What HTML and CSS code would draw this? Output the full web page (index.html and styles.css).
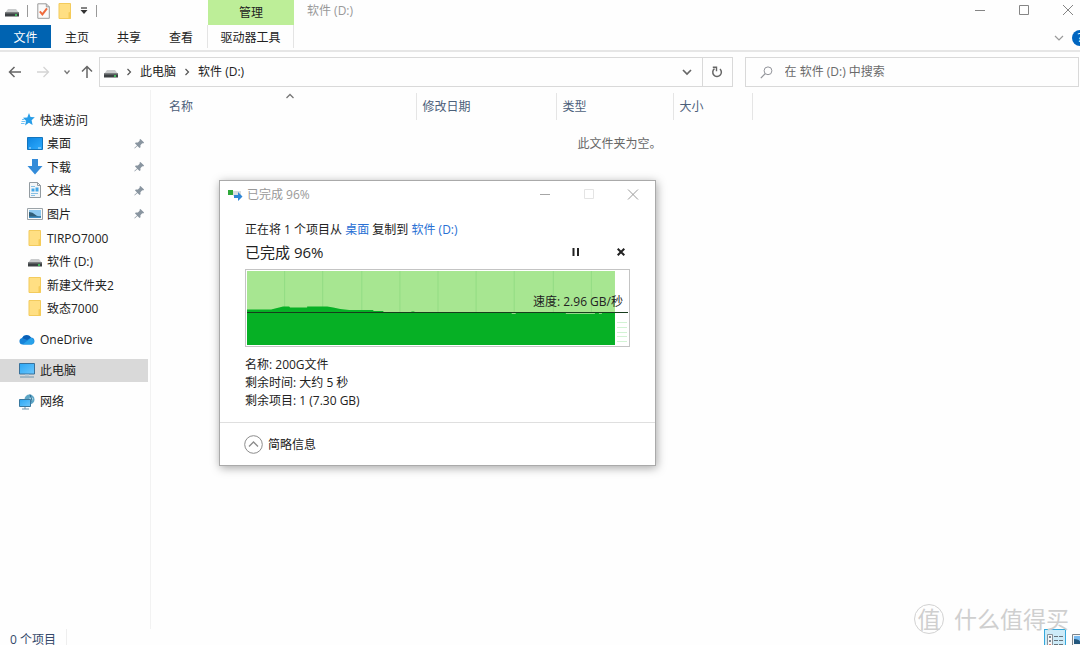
FILE: index.html
```html
<!DOCTYPE html>
<html lang="zh-CN">
<head>
<meta charset="utf-8">
<title>软件 (D:)</title>
<link rel="stylesheet" href="styles.css">
</head>
<body>
<svg class="sprite" aria-hidden="true">
  <defs>
    <linearGradient id="screen" x1="0" y1="0" x2="1" y2="1"><stop offset="0" stop-color="#2aa7f5"/><stop offset="1" stop-color="#6cc6fb"/></linearGradient>
    <linearGradient id="desk" x1="0" y1="0" x2="1" y2="1"><stop offset="0" stop-color="#0d84e0"/><stop offset="1" stop-color="#2eacff"/></linearGradient>
  </defs>
  <symbol id="drive" viewBox="0 0 14 14"><path d="M3 5h8l3 4H0z" fill="#c9cbcc"/><path d="M0 8.500h14v4H0z" fill="#3c4043"/><path d="M0 8.500h14v1H0z" fill="#74787b"/><circle cx="11" cy="11" r="1" fill="#45e066"/></symbol>
  <symbol id="folder" viewBox="0 0 14 16"><path d="M1 .5h11.500v15H1z" fill="#ffdf83" stroke="#f3cb5d"/><path d="M10.500 9.500l2.500-1v7h-2.500z" fill="#f5cb58"/></symbol>
  <symbol id="pin" viewBox="0 0 12 12"><path d="M7 1l4 4-1 1-1-.2-2 2 .1 2.200-1 1-2.400-2.400L.8 11.500l-.5-.5 3-2.900L1 5.800l1-1 2.200.1 2-2L6 2z" fill="#8995a0"/></symbol>
</svg>

<header class="titlebar">
  <div class="quick">
    <svg class="i14" aria-hidden="true"><use href="#drive"/></svg>
    <span class="bar"></span>
    <button class="plain" aria-label="属性"><svg width="13" height="16" viewBox="0 0 13 16"><path d="M.8.8h8.500l3 3v11.500H.8z" fill="#fafafa" stroke="#9b9b9b"/><path d="M9.300.8v3h3" fill="none" stroke="#9b9b9b"/><path d="M2.800 8.300l2.600 3 4.600-6" fill="none" stroke="#ee6a3c" stroke-width="2"/></svg></button>
    <button class="plain" aria-label="新建文件夹"><svg class="i-folder"><use href="#folder"/></svg></button>
    <button class="plain" aria-label="自定义快速访问工具栏"><svg width="8" height="8" viewBox="0 0 8 8"><path d="M1 1h6" stroke="#333" stroke-width="1.200"/><path d="M.5 3h7L4 7z" fill="#333"/></svg></button>
    <span class="bar"></span>
  </div>
  <div class="context">管理</div>
  <h1 class="caption">软件 (D:)</h1>
  <div class="wincontrols">
    <button class="plain" aria-label="最小化"><svg width="12" height="12" viewBox="0 0 12 12"><path d="M1 6.500h10" stroke="#858585"/></svg></button>
    <button class="plain" aria-label="最大化"><svg width="12" height="12" viewBox="0 0 12 12"><path d="M1.500 1.500h9v9h-9z" fill="none" stroke="#858585"/></svg></button>
    <button class="plain" aria-label="关闭"><svg width="12" height="12" viewBox="0 0 12 12"><path d="M1 1l10 10M11 1L1 11" stroke="#858585"/></svg></button>
  </div>
</header>

<nav class="ribbon">
  <button class="tab file">文件</button>
  <button class="tab">主页</button>
  <button class="tab">共享</button>
  <button class="tab">查看</button>
  <button class="tab tools">驱动器工具</button>
  <div class="ribbon-end">
    <button class="plain" aria-label="展开功能区"><svg width="10" height="8" viewBox="0 0 10 8"><path d="M1 2l4 4 4-4" fill="none" stroke="#9a9a9a" stroke-width="1.200"/></svg></button>
    <button class="help" aria-label="帮助">?</button>
  </div>
</nav>

<div class="navrow">
  <div class="arrows">
    <button class="plain" aria-label="后退"><svg width="14" height="12" viewBox="0 0 14 12"><path d="M6.500 1L1.500 6l5 5M1.500 6H13" fill="none" stroke="#666" stroke-width="1.500"/></svg></button>
    <button class="plain" aria-label="前进" disabled><svg width="14" height="12" viewBox="0 0 14 12"><path d="M7.500 1l5 5-5 5M12.500 6H1" fill="none" stroke="#d4d4d4" stroke-width="1.300"/></svg></button>
    <button class="plain recent" aria-label="最近位置"><svg width="8" height="8" viewBox="0 0 8 8"><path d="M1.500 2.500L4 5.500l2.500-3" fill="none" stroke="#777" stroke-width="1.300"/></svg></button>
    <button class="plain" aria-label="上移"><svg width="12" height="14" viewBox="0 0 12 14"><path d="M1 6.500l5-5 5 5M6 1.500V13" fill="none" stroke="#666" stroke-width="1.500"/></svg></button>
  </div>
  <div class="address">
    <svg class="i14" aria-hidden="true"><use href="#drive"/></svg>
    <svg class="sep" viewBox="0 0 6 8"><path d="M1.500 1l3 3-3 3" fill="none" stroke="#555" stroke-width="1.200"/></svg>
    <button class="plain">此电脑</button>
    <svg class="sep" viewBox="0 0 6 8"><path d="M1.500 1l3 3-3 3" fill="none" stroke="#555" stroke-width="1.200"/></svg>
    <button class="plain">软件 (D:)</button>
    <button class="plain drop" aria-label="以前的位置"><svg width="10" height="8" viewBox="0 0 10 8"><path d="M1 2l4 4 4-4" fill="none" stroke="#666" stroke-width="1.700"/></svg></button>
    <button class="plain refresh" aria-label="刷新"><svg width="12" height="12" viewBox="0 0 12 12"><path d="M9 3a4.300 4.300 0 1 1-5.500-.3" fill="none" stroke="#666" stroke-width="1.500"/><path d="M1.800 1.300h3.700v4" fill="none" stroke="#666" stroke-width="1.400"/></svg></button>
  </div>
  <label class="search">
    <svg width="13" height="13" viewBox="0 0 13 13" aria-hidden="true"><circle cx="8" cy="4.800" r="3.900" fill="none" stroke="#92949a"/><path d="M5.200 7.700L.8 12.200" stroke="#92949a" stroke-width="1.200"/></svg>
    <input type="text" aria-label="搜索" placeholder="在 软件 (D:) 中搜索">
  </label>
</div>

<main class="content">
  <aside class="sidebar">
    <ul class="places">
      <li class="row root"><svg width="14" height="13" viewBox="0 0 14 13"><path d="M8 0l1.500 4 4.300.2-3.200 3 1 4.800-3.700-2.300L4 12.500l1.200-4.600L2 4.800l4.300-.4z" fill="#279de8"/><path d="M.5 8.500h4M0 10.500h3.500M1 6.500h2.500" stroke="#74c3f5"/></svg><span>快速访问</span></li>
      <li class="row"><svg width="16" height="13" viewBox="0 0 16 13"><path d="M.5.500h15v12H.5z" fill="url(#desk)" stroke="#1375bd"/><path d="M2 11h2M11 11h3" stroke="#b7e3ff"/></svg><span>桌面</span><svg class="pin"><use href="#pin"/></svg></li>
      <li class="row"><svg width="16" height="16" viewBox="0 0 16 16"><path d="M5 0h6v7h4.500L8 15.500.5 7H5z" fill="#338bd9"/></svg><span>下载</span><svg class="pin"><use href="#pin"/></svg></li>
      <li class="row"><svg width="16" height="16" viewBox="0 0 16 16"><path d="M2.500.5h8l3 3v12h-11z" fill="#f3f6f8" stroke="#929ba1"/><path d="M10.500.5v3h3" fill="none" stroke="#929ba1"/><path d="M4 4.500h4M4 11.500h7M4 13.500h4" stroke="#86bfe4"/><path d="M4.500 6.500h3v3h-3zM8.500 5.500h3v4h-3z" fill="#45a7e7"/></svg><span>文档</span><svg class="pin"><use href="#pin"/></svg></li>
      <li class="row"><svg width="16" height="12" viewBox="0 0 16 12"><path d="M.5.500h15v11H.5z" fill="#f9fafa" stroke="#9ba3a8"/><path d="M2 2h12v8H2z" fill="#8fcaf0"/><path d="M2 4q4 0 6 2.500t6 1.500v2H2z" fill="#315f78"/><path d="M2 8.500h12V10H2z" fill="#3f8ec2"/></svg><span>图片</span><svg class="pin"><use href="#pin"/></svg></li>
      <li class="row"><svg class="i-folder"><use href="#folder"/></svg><span>TIRPO7000</span></li>
      <li class="row"><svg class="i14"><use href="#drive"/></svg><span>软件 (D:)</span></li>
      <li class="row"><svg class="i-folder"><use href="#folder"/></svg><span>新建文件夹2</span></li>
      <li class="row"><svg class="i-folder"><use href="#folder"/></svg><span>致态7000</span></li>
    </ul>
    <ul class="roots">
      <li class="row root"><svg width="16" height="11" viewBox="0 0 16 11"><path d="M3.500 10.500A3.300 3.300 0 0 1 3 4a5 5 0 0 1 9-.5 3.600 3.600 0 0 1 1 7z" fill="#1683d8"/><path d="M3.300 4A5 5 0 0 1 12 3.500L8 6z" fill="#0b5fb5"/><path d="M3.500 10.500L9 6.200l3-2.500a3.600 3.600 0 0 1 1 6.800z" fill="#28a2ea"/></svg><span>OneDrive</span></li>
      <li class="row root active"><svg width="16" height="15" viewBox="0 0 16 15"><path d="M.5.500h15v10.500H.5z" fill="url(#screen)" stroke="#39719a"/><path d="M6 11.500h4v1.500H6z" fill="#b9cbd6"/><path d="M1 14h14" stroke="#6d93ac"/></svg><span>此电脑</span></li>
      <li class="row root"><svg width="16" height="16" viewBox="0 0 16 16"><circle cx="10.500" cy="5.500" r="5" fill="#5ea6c6"/><path d="M8 2l3 1-1 3 3 1 1-3" fill="#c1dfe8"/><path d="M11 .5q3 4 0 10" fill="none" stroke="#266a93"/><path d="M.5 5.500h11v7H.5z" fill="url(#screen)" stroke="#39789f"/><path d="M3 15h7M6 13v2" stroke="#6d93ac"/></svg><span>网络</span></li>
    </ul>
  </aside>
  <section class="pane">
    <table class="files">
      <thead>
        <tr>
          <th class="c-name">名称<svg class="sort" width="8" height="6" viewBox="0 0 8 6"><path d="M.5 5L4 1.500 7.500 5" fill="none" stroke="#777" stroke-width="1.300"/></svg></th>
          <th class="c-date">修改日期</th>
          <th class="c-type">类型</th>
          <th class="c-size">大小</th>
          <td></td>
        </tr>
      </thead>
      <tbody><tr><td class="empty" colspan="5">此文件夹为空。</td></tr></tbody>
    </table>
  </section>
</main>

<footer class="status">
  <span class="count">0 个项目</span>
  <div class="views">
    <button class="view on" aria-label="详细信息"><svg width="16" height="14" viewBox="0 0 16 14"><path d="M.5.500h5v13h-5z" fill="#f6f6f6" stroke="#8a9299"/><path d="M2 3h2M2 7h2" stroke="#4d6679" stroke-width="1.500"/><path d="M2 11h2" stroke="#d9604a" stroke-width="1.500"/><path d="M7 2.500h4M12 2.500h4M7 6.500h4M12 6.500h4M7 10.500h4M12 10.500h4" stroke="#68727a"/></svg></button>
    <button class="view" aria-label="大图标"><svg width="16" height="14" viewBox="0 0 16 14"><path d="M.5.500h15v13H.5z" fill="#f6f6f6" stroke="#7c858c"/><path d="M2 2h12v8H2z" fill="#77baf0"/><path d="M2 5q5 0 6 2.500h6V10H2z" fill="#23577d"/></svg></button>
  </div>
</footer>

<div class="dialog" role="dialog" aria-labelledby="dlg-title">
  <div class="dlg-bar">
    <svg width="16" height="14" viewBox="0 0 16 14" aria-hidden="true"><path d="M1 2h5v5H1z" fill="#2fa83a"/><path d="M6 3h8v5H6z" fill="#d9dde0"/><path d="M7 7h4V4l4.500 4.500L11 13v-3H7z" fill="#2e86d6"/></svg>
    <h2 id="dlg-title">已完成 96%</h2>
    <div class="dlg-controls">
      <button class="plain" aria-label="最小化"><svg width="12" height="12" viewBox="0 0 12 12"><path d="M1 5.500h10" stroke="#a6a6a6"/></svg></button>
      <button class="plain" aria-label="最大化" disabled><svg width="12" height="12" viewBox="0 0 12 12"><path d="M1.500.5h9v9h-9z" fill="none" stroke="#e4e4e4"/></svg></button>
      <button class="plain" aria-label="关闭"><svg width="12" height="12" viewBox="0 0 12 12"><path d="M1 .5l10 10M11 .5l-10 10" stroke="#999"/></svg></button>
    </div>
  </div>
  <div class="dlg-body">
    <p class="from">正在将 1 个项目从 <a href="#desktop">桌面</a> 复制到 <a href="#drive-d">软件 (D:)</a></p>
    <div class="progress-line">
      <p class="progress">已完成 96%</p>
      <button class="plain" aria-label="暂停"><svg width="8" height="8" viewBox="0 0 8 8"><path d="M1.500 0v8M6 0v8" stroke="#222" stroke-width="2"/></svg></button>
      <button class="plain" aria-label="取消"><svg width="8" height="8" viewBox="0 0 8 8"><path d="M.7.700l6.600 6.600M7.300.7L.7 7.300" stroke="#222" stroke-width="2"/></svg></button>
    </div>
    <div class="chart">
      <svg viewBox="0 0 380 74" preserveAspectRatio="none" aria-hidden="true">
        <path d="M0 0h367v74H0z" fill="#a7e691"/>
        <path d="M37.500 0v42M75.500 0v42M114.500 0v42M152.500 0v42M190.500 0v42M228.500 0v42M266.500 0v42M305.500 0v42M343.500 0v42" stroke="#93dc84"/>
        <path d="M369 51.500h10M369 56.500h10M369 61.500h10M369 65.500h10M369 70.500h10" stroke="#d2f3d4"/>
        <path d="M0 38.500h24l6-1.500 6-1.500h6l1 1h17v-1h20l6 1 7 1.500 9 1h24v1h10v1h28v-.5h3v.5h200v33H0z" fill="#06b025"/>
        <path d="M264 42.500h4M318 42.500h29M351 42.500h3" stroke="#8fdc86"/>
        <path d="M0 41.500h380" stroke="#173c1c"/>
      </svg>
      <span class="speed">速度: 2.96 GB/秒</span>
    </div>
    <div class="details">
      <p>名称: 200G文件</p>
      <p>剩余时间: 大约 5 秒</p>
      <p>剩余项目: 1 (7.30 GB)</p>
    </div>
  </div>
  <div class="dlg-foot">
    <button class="plain less"><svg width="19" height="19" viewBox="0 0 19 19"><circle cx="9.500" cy="9.500" r="8.800" fill="none" stroke="#8c8c8c"/><path d="M5 11.500l4.500-4.500 4.500 4.500" fill="none" stroke="#8c8c8c" stroke-width="1.300"/></svg>简略信息</button>
  </div>
</div>

<div class="watermark"><span class="seal">值</span><span>什么值得买</span></div>
</body>
</html>
```
FILE: styles.css
```css
* { box-sizing: border-box; }
html, body { height: 100%; }
body {
  margin: 0;
  position: relative;
  display: flex;
  flex-direction: column;
  overflow: hidden;
  background: #fefefe;
  color: #222;
  font: 12px/16px "Open Sans", "Noto Sans CJK SC", sans-serif;
}
h1, h2, p, ul { margin: 0; padding: 0; font-size: inherit; font-weight: 400; }
ul { list-style: none; }
svg { display: block; flex: none; }
button, input { font: inherit; color: inherit; }
.sprite { position: absolute; width: 0; height: 0; }
.plain {
  display: flex;
  align-items: center;
  justify-content: center;
  padding: 0;
  border: 0;
  background: none;
  white-space: nowrap;
}
.i14 { width: 14px; height: 14px; }
.i-folder { width: 14px; height: 16px; }

/* title bar */
.titlebar { display: flex; height: 25px; flex: none; }
.quick { display: flex; align-items: center; width: 208px; gap: 8px; padding: 0 0 4px 5px; }
.bar { width: 1px; height: 12px; background: #999; }
.quick .bar + .plain { margin-left: 1px; }
.context {
  width: 86px;
  background: #bdee98;
  text-align: center;
  line-height: 26px;
}
.caption { padding-left: 13px; color: #999; line-height: 22px; }
.wincontrols { display: flex; align-items: center; gap: 32px; margin-left: auto; padding: 0 6px 5px 0; }

/* ribbon */
.ribbon { display: flex; height: 27px; flex: none; border-bottom: 2px solid #e6e6e6; }
.tab { width: 52px; height: 23px; padding: 2px 0 0; border: 0; background: none; }
.tab.file { width: 51px; background: #0063b1; color: #fff; }
.tab.tools { width: 87px; border: solid #e4e4e4; border-width: 0 1px; }
.ribbon-end { display: flex; align-items: center; gap: 8px; margin: 0 -8px 0 auto; }
.help {
  width: 16px;
  height: 16px;
  padding: 0;
  border: 0;
  border-radius: 50%;
  background: #0065c0;
  color: #fff;
  line-height: 16px;
}

/* address row */
.navrow { display: flex; flex: none; padding: 5px 1px 3px 0; }
.arrows { display: flex; align-items: center; width: 99px; padding-left: 8px; gap: 14px; }
.recent { margin: 0 -4px 0 -1px; }
.address, .search { display: flex; align-items: center; height: 30px; border: 1px solid #d9d9d9; }
.address { flex: 1; padding-left: 4px; gap: 8px; }
.sep { width: 6px; height: 8px; }
.drop { width: 30px; height: 28px; margin: 0 -8px 0 auto; }
.refresh { width: 30px; height: 28px; border-left: 1px solid #d9d9d9; }
.search { width: 31%; margin-left: 12px; padding-left: 14px; gap: 12px; }
.search input { flex: 1; min-width: 0; padding: 0; border: 0; outline: 0; background: none; }
.search input::placeholder { color: #6a6a6a; opacity: 1; }

/* content */
.content { display: flex; flex: 1; min-height: 0; }
.sidebar { width: 151px; padding-top: 18px; border-right: 1px solid #f2f2f2; }
.places { display: grid; grid-template-rows: repeat(9, 1fr); height: 212px; }
.roots { display: grid; gap: 8px; padding-top: 8px; }
.row {
  display: flex;
  align-items: center;
  min-height: 23px;
  margin-right: 2px;
  padding: 0 3px 0 27px;
  gap: 4px;
}
.row > svg:first-child { margin: 0 auto; }
.row > span { flex: 1; }
.places .row > span { padding-top: 2px; }
.row > .i14, .row > .i-folder { width: 16px; }
.row.root { padding-left: 19px; gap: 5px; }
.places .row.root { padding-left: 21px; }
.row.active { background: #d9d9d9; }
.row .pin { width: 11px; height: 11px; }

.pane { flex: 1; min-width: 0; padding-top: 3px; }
.files { width: 100%; border-collapse: collapse; table-layout: fixed; }
.files th {
  position: relative;
  height: 27px;
  padding: 0 0 0 6px;
  border-right: 1px solid #e5e5e5;
  color: #4c607a;
  font-weight: 400;
  text-align: left;
}
.files .c-name { width: 265px; padding-left: 18px; }
.c-date { width: 140px; }
.c-type { width: 117px; }
.c-size { width: 79px; }
.sort { position: absolute; top: 0; left: 51%; }
.files .empty { padding: 16px 0 0 8px; color: #666; text-align: center; }

/* status bar */
.status { display: flex; flex: none; height: 16px; overflow: hidden; color: #34486a; }
.count { height: 20px; padding: 3px 10px 0; border-right: 1px solid #eee; }
.views { display: flex; gap: 3px; margin: 0 -11px 0 auto; }
.view { display: flex; width: 22px; height: 22px; padding: 4px 2px; border: 1px solid transparent; background: none; }
.view.on { border-color: #35a8dc; background: #cdebf8; }

/* copy dialog */
.dialog {
  position: absolute;
  top: 180px;
  left: 219px;
  width: 437px;
  border: 1px solid #aaa;
  background: #fff;
  box-shadow: 1px 2px 9px rgba(0, 0, 0, .35);
}
.dlg-bar { display: flex; align-items: center; height: 28px; padding: 0 16px 0 7px; gap: 4px; color: #999; }
.dlg-controls { display: flex; gap: 32px; margin-left: auto; }
.dlg-body { padding: 13px 25px 12px; }
.from a { color: #2a70d4; text-decoration: none; }
.progress-line { display: flex; align-items: center; gap: 37px; height: 28px; padding-right: 5px; }
.progress { flex: 1; font-size: 15px; line-height: 24px; }
.chart { position: relative; height: 78px; margin-top: 3px; padding: 1px; border: 1px solid #c4c4c4; background: #fff; }
.chart svg { width: 100%; height: 100%; }
.speed { position: absolute; right: 6px; top: 24px; }
.details { padding-top: 9px; line-height: 18px; }
.dlg-foot { height: 43px; padding: 12px 24px; border-top: 1px solid #dfdfdf; }
.less { gap: 5px; }

.watermark {
  position: absolute;
  right: 11px;
  bottom: 8px;
  display: flex;
  align-items: center;
  gap: 10px;
  color: #cfcfcf;
  font-size: 23px;
  line-height: 36px;
}
.seal {
  width: 30px;
  height: 30px;
  border: 1px solid #d2d2d2;
  border-radius: 50%;
  line-height: 28px;
  text-align: center;
}
```
